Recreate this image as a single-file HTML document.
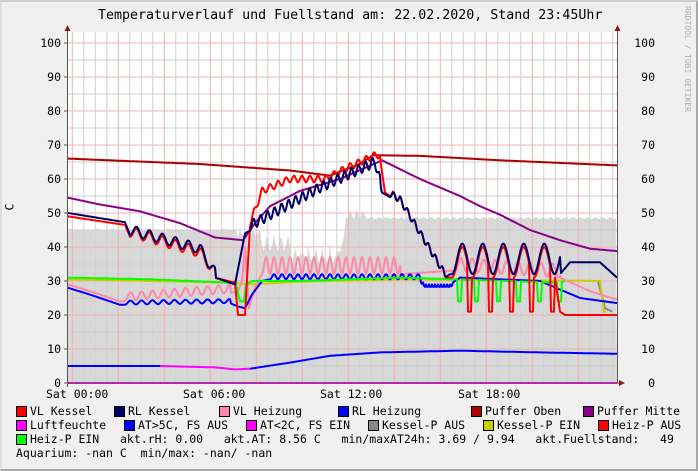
<!DOCTYPE html>
<html><head><meta charset="utf-8"><style>
body{margin:0;width:698px;height:471px;overflow:hidden;background:#f0f0f0;}
#w{position:absolute;left:0;top:0;width:698px;height:471px;box-sizing:border-box;border-top:2px solid #cfcfcf;border-left:2px solid #dcdcdc;border-right:2px solid #a8a8a8;border-bottom:2px solid #a8a8a8;background:#f0f0f0;}
.t{position:absolute;font-family:"DejaVu Sans Mono","Liberation Mono",monospace;font-size:11.5px;color:#000;white-space:pre;line-height:14px;}
.sq{position:absolute;width:9px;height:9px;border:1px solid #000;}
svg{position:absolute;left:0;top:0;}
</style></head><body><div id="w"></div>
<svg id="s" width="698" height="471" xmlns="http://www.w3.org/2000/svg"></svg>
<div class="t" style="left:98px;top:9px;font-size:13.3px;">Temperaturverlauf und Fuellstand am: 22.02.2020, Stand 23:45Uhr</div>
<div class="t" style="left:682px;top:6px;font-size:8px;color:#b0b0b0;transform-origin:0 0;transform:translate(12px,0) rotate(90deg);">RRDTOOL / TOBI OETIKER</div>
<div class="t" style="left:6px;top:200px;transform:rotate(-90deg);">C</div>
<div class="t" style="left:46px;top:387px;">Sat 00:00</div>
<div class="t" style="left:183px;top:387px;">Sat 06:00</div>
<div class="t" style="left:320px;top:387px;">Sat 12:00</div>
<div class="t" style="left:458px;top:387px;">Sat 18:00</div>

<div class="sq" style="left:16px;top:406px;background:#ff0000"></div><div class="t" style="left:30px;top:404px;">VL Kessel</div>
<div class="sq" style="left:114px;top:406px;background:#000066"></div><div class="t" style="left:128px;top:404px;">RL Kessel</div>
<div class="sq" style="left:219px;top:406px;background:#ff88aa"></div><div class="t" style="left:233px;top:404px;">VL Heizung</div>
<div class="sq" style="left:338px;top:406px;background:#0000ff"></div><div class="t" style="left:352px;top:404px;">RL Heizung</div>
<div class="sq" style="left:471px;top:406px;background:#aa0000"></div><div class="t" style="left:485px;top:404px;">Puffer Oben</div>
<div class="sq" style="left:583px;top:406px;background:#880088"></div><div class="t" style="left:597px;top:404px;">Puffer Mitte</div>

<div class="sq" style="left:16px;top:420px;background:#ff00ff"></div><div class="t" style="left:30px;top:418px;">Luftfeuchte</div>
<div class="sq" style="left:124px;top:420px;background:#0000ff"></div><div class="t" style="left:138px;top:418px;">AT&gt;5C, FS AUS</div>
<div class="sq" style="left:246px;top:420px;background:#ff00ff"></div><div class="t" style="left:260px;top:418px;">AT&lt;2C, FS EIN</div>
<div class="sq" style="left:368px;top:420px;background:#888888"></div><div class="t" style="left:382px;top:418px;">Kessel-P AUS</div>
<div class="sq" style="left:483px;top:420px;background:#cccc00"></div><div class="t" style="left:497px;top:418px;">Kessel-P EIN</div>
<div class="sq" style="left:598px;top:420px;background:#ff0000"></div><div class="t" style="left:612px;top:418px;">Heiz-P AUS</div>

<div class="sq" style="left:16px;top:434px;background:#00ff00"></div><div class="t" style="left:30px;top:432px;">Heiz-P EIN   akt.rH: 0.00   akt.AT: 8.56 C   min/maxAT24h: 3.69 / 9.94   akt.Fuellstand:   49</div>
<div class="t" style="left:16px;top:446px;">Aquarium: -nan C  min/max: -nan/ -nan</div>
<script>
var s=document.getElementById('s'),h='';
function Y(v){return 383-3.4*v;}
function L(x1,y1,x2,y2,c,w){h+='<line x1="'+x1+'" y1="'+y1+'" x2="'+x2+'" y2="'+y2+'" stroke="'+c+'" stroke-width="'+(w||1)+'"/>';}
h+='<rect x="68" y="32" width="549" height="351" fill="#fff"/>';
var g=[];
for(var x=68;x<=617;x+=2){var v;
 if(x<238)v=45+(x%7==0?0.5:0);
 else if(x<262)v=44+1.5*Math.sin(x);
 else if(x<345){v=41+2.5*Math.sin(x*0.9)+((x>290&&x<340)?-4+2*Math.sin(x*1.7):0);}
 else if(x<365)v=49.5-1.5*Math.sin(x);
 else v=48.5+0.3*Math.sin(x*2.3);
 g.push([x,v]);}
var gp='M68,383 ';g.forEach(function(p){gp+='L'+p[0]+','+Y(p[1]).toFixed(1)+' ';});gp+='L617,383 Z';
h+='<path d="'+gp+'" fill="#d8d8d8"/>';
for(var v=0;v<=100;v+=5){var y=Y(v);L(68,y,617,y,v%10?'#d0d0d0':'#f2b0b0');}
for(var k=0;k<48;k++){var x=72.3+11.5*k;if(x>617)break;L(x,32,x,383,k%4?'#d0d0d0':'#f2b0b0');}
function lerp(a,b,t){return a+(b-a)*t;}
function seg(pts){var o=[];for(var i=0;i<pts.length-1;i++){var a=pts[i],b=pts[i+1];for(var x=a[0];x<b[0];x+=1){o.push([x,lerp(a[1],b[1],(x-a[0])/(b[0]-a[0]))]);}}o.push(pts[pts.length-1]);return o;}
function wave(o,x0,x1,amp,per){return o.map(function(p){if(p[0]>=x0&&p[0]<=x1){var f=((p[0]-x0)%per)/per;return [p[0],p[1]+amp*(0.5-0.5*Math.cos(2*Math.PI*f))];}return p;});}
function P(o,c,w){var d='';o.forEach(function(p,i){d+=(i?'L':'M')+p[0]+','+Y(p[1]).toFixed(1)+' ';});h+='<path d="'+d+'" fill="none" stroke="'+c+'" stroke-width="'+(w||2)+'" stroke-linejoin="round"/>';}
P(seg([[598,30],[605,22],[612,21]]),'#888',2);
P(seg([[68,66],[200,64.4],[290,62.5],[330,61],[360,64.5],[373,67],[420,66.8],[500,65.5],[617,64]]),'#aa0000');
P(seg([[68,54.5],[100,52.5],[140,50.5],[180,47],[215,42.8],[243,42],[255,47],[270,52],[300,56.5],[340,60],[382,65.5],[420,60],[460,55],[480,52],[500,49.5],[530,45],[560,42],[590,39.5],[617,38.8]]),'#880088');
P(seg([[68,30.5],[230,29.5],[250,29],[300,29.8],[400,30.5],[600,30],[604,21],[606,21]]),'#cccc00');
var vh=seg([[68,29],[90,27],[120,24],[230,26.5],[238,27],[242,30],[245,40],[249,22],[255,28],[262,32],[280,32],[400,32],[450,33],[560,31],[590,27],[617,24.5]]);
vh=wave(vh,125,230,2.5,11);vh=wave(vh,262,400,5,8);vh=wave(vh,455,560,4,11.5);
P(vh,'#ff88aa');
var rh=seg([[68,28],[90,26],[120,23],[230,23.5],[238,22.5],[245,22],[252,26],[262,30],[270,30.5],[420,30.5],[425,29],[450,29],[460,31],[540,30],[580,25],[617,23.5]]);
rh=wave(rh,125,230,1.2,11);rh=wave(rh,270,420,1.5,8);rh=wave(rh,420,452,-1,3);
P(rh,'#0000ff');
var gr=seg([[68,31],[150,30.5],[230,29.5],[236,29],[240,24],[244,24],[246,29],[252,30],[300,30],[400,31],[455,30.5],[560,29.5],[565,30]]);
[458,475,497,517,538,558].forEach(function(xx){gr=gr.map(function(p){if(p[0]>=xx&&p[0]<=xx+3)return [p[0],24];return p;});});
P(gr,'#00ff00');
var vk=seg([[68,49],[125,46.5],[130,43],[200,37],[215,31],[235,29.5],[238,20],[245,20],[250,46],[262,55.5],[290,59],[325,59],[345,62],[375,66],[380,66],[385,56],[400,53],[445,31],[555,31],[560,21],[565,20],[617,20]]);
vk=wave(vk,130,215,3,13);vk=wave(vk,250,380,2,8);vk=wave(vk,390,445,2,7);vk=wave(vk,452,555,9,20.5);
[468,489,510,530,551].forEach(function(xx){vk=vk.map(function(p){var d=p[0]-xx;if(d>=0&&d<4)return [p[0],21];return p;});});
P(vk,'#ff0000');
var rk=seg([[68,50],[125,47.3],[130,43.5],[200,38],[215,31],[235,29],[245,44],[270,48],[320,56],[375,63.5],[382,56],[400,53],[445,31],[450,32],[560,32],[570,35.5],[600,35.5],[617,31]]);
rk=wave(rk,130,215,3,13);rk=wave(rk,250,380,3,7);rk=wave(rk,390,445,2,7);rk=wave(rk,452,560,9,20.5);
P(rk,'#000066');
P([[68,0],[617,0]],'#ff00ff');
P(seg([[68,5],[160,5]]),'#0000ff');
P(seg([[160,5],[215,4.6],[235,4],[250,4.2]]),'#ff00ff');
P(seg([[250,4.2],[290,6],[330,8],[380,9],[460,9.5],[540,9],[617,8.6]]),'#0000ff');
L(67.5,30,67.5,387,'#555',1);L(617.5,30,617.5,383,'#555',1);L(64,383,620,383,'#555',1);
h+='<path d="M64.5,31 L67.5,25 L70.5,31Z" fill="#8b1a1a"/><path d="M614.5,31 L617.5,25 L620.5,31Z" fill="#8b1a1a"/><path d="M619,380 L625,383 L619,386Z" fill="#8b1a1a"/>';
for(var v=0;v<=100;v+=10){var y=Y(v);L(64,y,68,y,'#555',1);
 h+='<text x="61" y="'+(y+4)+'" text-anchor="end" font-family="DejaVu Sans Mono,Liberation Mono,monospace" font-size="11.5">'+v+'</text>';
 h+='<text x="655" y="'+(y+4)+'" text-anchor="end" font-family="DejaVu Sans Mono,Liberation Mono,monospace" font-size="11.5">'+v+'</text>';}
s.innerHTML=h;
</script>
</body></html>
